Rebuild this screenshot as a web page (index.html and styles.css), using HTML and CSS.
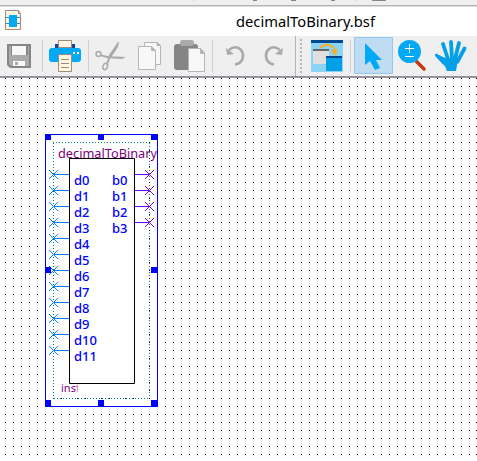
FILE: index.html
```
<!DOCTYPE html>
<html lang="en">
<head>
<meta charset="utf-8">
<title>decimalToBinary.bsf</title>
<link rel="stylesheet" href="styles.css">
</head>
<body>
<div class="window">
  <div class="upper-edge">
    <svg width="477" height="7" viewBox="0 0 477 7" shape-rendering="crispEdges"><path d="M253 0h4M291 0h5M331 0h4M372 0h14" stroke="#858585" stroke-width="2"/><path d="M193 0h1M356 0h1" stroke="#ccc" stroke-width="2"/></svg>
  </div>
  <header class="titlebar">
    <svg class="doc-icon" width="18" height="22" viewBox="0 0 18 22"><path d="M1.500 1.500h13l2 3v16h-15z" fill="#fff8e3" stroke="#a1887f"/><path d="M14.500 1.500v3h2" fill="none" stroke="#a1887f"/><path d="M1 8.500h4M13 8.500h3M1 14.500h4M13 14.500h3" stroke="#3f8fc4"/><path d="M5 6h8v12H5z" fill="#03a9f4"/></svg>
    <span class="title"><svg width="144" height="24"><text x="1" y="17" textLength="139" lengthAdjust="spacingAndGlyphs">decimalToBinary.bsf</text></svg></span>
  </header>
  <div class="toolbars">
    <div class="toolbar main-tools">
      <svg width="295" height="40" viewBox="0 36 295 40">
        <path d="M7 44h24v24H10l-3-3z" fill="#858585"/><path d="M9 46h2v9h17v-9h1v20H11l-2-2z" fill="#aaa"/><path d="M12 46h14v9H12zM13 61h12v5H13z" fill="#f8f8f8"/><path d="M15 62h3v3h-3z" fill="#aaa"/>
        <path d="M42.500 40v32M88.500 40v32M212.500 40v32" stroke="#d0d0d0"/>
        <path d="M55 44h20v6H55z" fill="#0d47a1"/><rect x="49" y="48" width="32" height="14" rx="3" fill="#03a9f4"/><path d="M58.500 40.500h13v7h-13zM58.500 54.500h13v17h-13z" fill="#fff8e1" stroke="#a1887f"/><path d="M61 59.500h8M61 63.500h8M61 67.500h8" stroke="#a1887f"/><path d="M73 52h2v2h-2zM77 52h2v2h-2z" fill="#fff"/>
        <g fill="none" stroke="#aaa"><circle cx="98.500" cy="54" r="2.400" stroke-width="1.500"/><ellipse cx="105.200" cy="66.500" rx="2.200" ry="3.200" transform="rotate(20 105.200 66.500)" stroke-width="1.500"/></g><path d="M100 54l7 2 19 1-4 2-15-1-7-2zM106 64l3-9 9-13h1l-1 5-8 12-2 5z" fill="#aaa"/>
        <g fill="#f8f8f8" stroke="#b5b5b5"><path d="M144.500 42.500h13l3 3v19h-16z"/><path d="M157 42.500v3h3" fill="#b5b5b5"/><path d="M138.500 46.500h13l4 4v19h-17z"/><path d="M151.500 46.500l4 4h-4z" fill="#b5b5b5"/></g>
        <rect x="174" y="44" width="24" height="26" rx="3" fill="#858585"/><rect x="180" y="40" width="14" height="6" rx="2.500" fill="#aaa"/><path d="M188.500 48.500h12l4 4v19h-16z" fill="#f8f8f8" stroke="#b5b5b5"/><path d="M200.500 48.500l4 5h-4z" fill="#b5b5b5" stroke="#b5b5b5"/>
        <g fill="none" stroke="#aaa" stroke-width="2.700"><path d="M229 50c7-6 14-1 14 6 0 5-4 8-8 8.500"/><path d="M280 50c-7-6-14-1-14 6 0 5 4 8 8 8.500"/></g><path d="M226 48l1 7 7-1zM283 48l-1 7-7-1z" fill="#aaa"/>
      </svg>
    </div>
    <div class="toolbar edit-tools">
      <svg width="181" height="40" viewBox="296 36 181 40">
        <path d="M301 39v34" stroke="#b4b4b4" stroke-width="2" stroke-dasharray="2 2" shape-rendering="crispEdges"/>
        <path d="M311 40h32v32h-32z" fill="#8bd4f5"/><path d="M311 40h32v3h-32z" fill="#01478b"/><path d="M313 49h16v15h-16z" fill="#e0e1de"/><path d="M313 49h16v2h-16z" fill="#666"/><path d="M326 56h16v15h-16z" fill="#03a0e8"/><path d="M326 56h16v2h-16z" fill="#01478b"/><path d="M320 48c5-5 14-4 15 4" fill="none" stroke="#ffab20" stroke-width="2"/><path d="M331 50l4 6 3-7-3 1z" fill="#ffab20"/>
        <path d="M350.500 40v32" stroke="#d0d0d0"/>
        <path d="M354.500 37.500h38v36h-38z" fill="#bfdcf3" stroke="#90caf4"/><path d="M365 43v22l5-4 5 9 5-2-4-8h6z" fill="#03a9f4"/>
        <path d="M416 61l8 8" stroke="#bf3b17" stroke-width="3.500" stroke-linecap="round"/><circle cx="409.500" cy="51.500" r="11.500" fill="#03a9f4"/><path d="M409.500 44v9M405 48.500h9M405 56.500h9" stroke="#fff"/>
        <path d="M446.500 71c0-3-1-5-4-7l-6.500-7c-2-2-1-4 1-3l6 3 3 1h10l3 1-2 6-1 6z" fill="#03a0e8"/><path d="M443 44l5 15M451 42l1 17M459 43l-4 16M464.500 48.500l-7 13" fill="none" stroke="#03a0e8" stroke-width="3.800" stroke-linecap="round"/>
      </svg>
    </div>
  </div>
  <main class="canvas">
    <svg width="477" height="383" viewBox="0 78 477 383">
      <defs>
        <pattern id="grid" x="5" y="78" width="8" height="8" patternUnits="userSpaceOnUse"><path d="M0 0h1v1H0z"/></pattern>
        <clipPath id="instClip"><path d="M60 380h17.500v16H60z"/></clipPath>
        <path id="cross" d="M-4 -4L5 5M-4 5L5 -4"/>
        <g id="input"><path d="M53 174.500h16"/><use href="#cross" x="53" y="174"/></g>
        <g id="output"><path d="M135 174.500h15"/><use href="#cross" x="149" y="174"/></g>
      </defs>
      <rect y="78" width="477" height="378" fill="url(#grid)"/>
      <path d="M476.500 78v377" stroke="#000" stroke-dasharray="1 7"/>
      <path d="M53 142h96v256H53z" fill="#fff"/>
      <g shape-rendering="crispEdges" fill="none">
        <path d="M53 142.500h97M53.500 143v256M54 398.500h96M149.500 143v256" stroke="#008080" stroke-dasharray="1 2"/>
        <path d="M149.500 142v257" stroke="#000" stroke-dasharray="1 7"/>
        <path d="M45.500 134.500h112v272h-112z" stroke="#00f"/>
      </g>
      <text class="name" x="58" y="158" textLength="99" lengthAdjust="spacingAndGlyphs">decimalToBinary</text>
      <path d="M69.500 158.500h65v225h-65z" fill="#fff" stroke="#000"/>
      <g class="inputs"><use href="#input"/><use href="#input" y="16"/><use href="#input" y="32"/><use href="#input" y="48"/><use href="#input" y="64"/><use href="#input" y="80"/><use href="#input" y="96"/><use href="#input" y="112"/><use href="#input" y="128"/><use href="#input" y="144"/><use href="#input" y="160"/><use href="#input" y="176"/></g>
      <g class="outputs"><use href="#output"/><use href="#output" y="16"/><use href="#output" y="32"/><use href="#output" y="48"/></g>
      <g class="pins">
        <text x="74" y="185">d0</text><text x="74" y="201">d1</text><text x="74" y="217">d2</text><text x="74" y="233">d3</text><text x="74" y="249">d4</text><text x="74" y="265">d5</text><text x="74" y="281">d6</text><text x="74" y="297">d7</text><text x="74" y="313">d8</text><text x="74" y="329">d9</text><text x="74" y="345">d10</text><text x="74" y="361">d11</text>
        <text x="112" y="185">b0</text><text x="112" y="201">b1</text><text x="112" y="217">b2</text><text x="112" y="233">b3</text>
      </g>
      <g clip-path="url(#instClip)"><text class="inst" x="61" y="392">inst</text></g>
      <path d="M45 134h6v6h-6zM98 134h6v6h-6zM151 134h7v6h-7zM45 267h6v6h-6zM151 267h7v6h-7zM45 400h6v7h-6zM98 400h6v7h-6zM151 400h7v7h-7z" fill="#00f"/>
    </svg>
  </main>
</div>
</body>
</html>
```
FILE: styles.css
```
body { margin: 0; background: #fff; font-family: "Noto Sans", sans-serif; }
svg { display: block; }
.window { display: flex; flex-direction: column; width: 477px; height: 461px; overflow: hidden; }
.upper-edge { box-sizing: border-box; height: 7px; background: linear-gradient(#efefef 5px, #b4b4b4 5px 6px, #dcdcdc 6px); }
.titlebar { display: flex; align-items: flex-start; height: 29px; background: #fff; padding-left: 4px; }
.doc-icon { margin-top: 2px; }
.title { margin: 3px 0 0 213px; font-size: 15px; }
.toolbars { display: flex; height: 42px; box-sizing: border-box; background: #efefef; border-bottom: 2px solid #92929a; }
.main-tools { width: 295px; height: 40px; border-right: 1px solid #b4b4b4; }
.name { font-size: 13px; fill: #800080; }
.inst { font-size: 11px; fill: #800080; }
.pins { font-size: 13px; font-weight: 500; fill: #00f; }
.inputs { stroke: #0080ff; fill: none; }
.outputs { stroke: #8000ff; fill: none; }
```
